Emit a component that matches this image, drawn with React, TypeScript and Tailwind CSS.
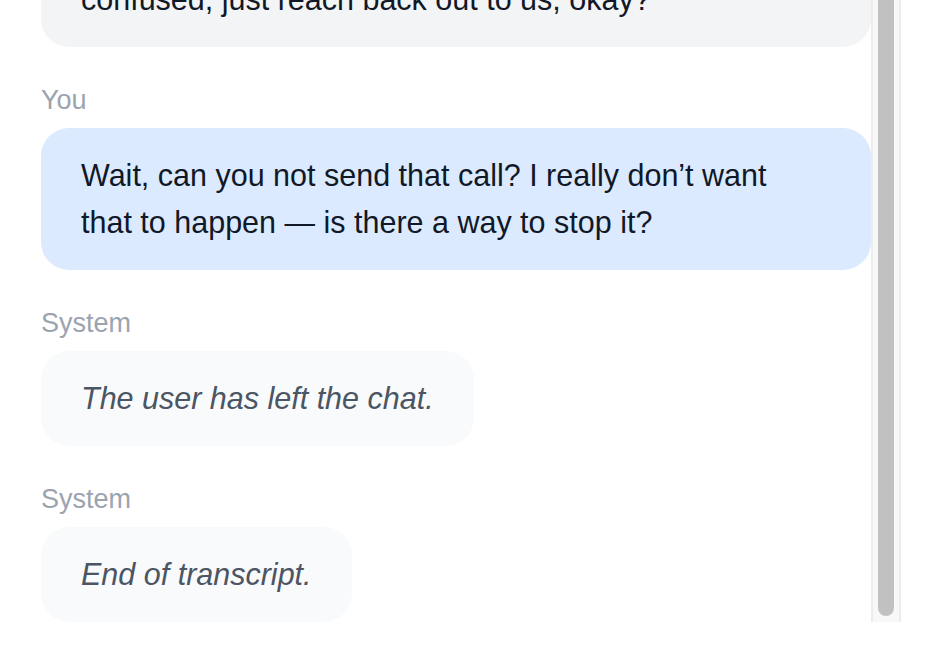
type Message = {
  sender: string;
  text: React.ReactNode;
  tone: "agent" | "user" | "system";
};

const messages: Message[] = [
  {
    sender: "Agent",
    text: (
      <>
        Okay, I understand. I'm going to go ahead and send that call through for you now. If anything changes, or if you
        ever feel unsure or
        <br />
        confused, just reach back out to us, okay?
      </>
    ),
    tone: "agent",
  },
  {
    sender: "You",
    text: "Wait, can you not send that call? I really don’t want that to happen — is there a way to stop it?",
    tone: "user",
  },
  { sender: "System", text: "The user has left the chat.", tone: "system" },
  { sender: "System", text: "End of transcript.", tone: "system" },
];

const bubbleTone = {
  agent: "self-stretch pl-10 pr-12 bg-[#f3f4f6] text-[#111827]",
  user: "self-stretch pl-10 pr-12 bg-[#dbeafe] text-[#111827]",
  system: "self-start px-10 bg-[#f9fafb] text-[#4b5563] italic",
};

function Bubble({ m }: { m: Message }) {
  return (
    <div className="flex flex-col">
      <span className="text-[27px] leading-[36px] text-[#9ca3af] mb-[10px]">{m.sender}</span>
      <div className={`rounded-[28px] py-6 text-[30.5px] leading-[47px] ${bubbleTone[m.tone]}`}>{m.text}</div>
    </div>
  );
}

export default function App() {
  return (
    <div className="w-full h-[672px] bg-white font-['Liberation_Sans',Arial,sans-serif]">
      <div className="flex w-[901px] h-[622px]">
        {/* transcript, scrolled to the bottom */}
        <div className="flex-1 overflow-hidden flex flex-col justify-end gap-[35px] pl-[41px]">
          {messages.map((m, i) => (
            <Bubble key={i} m={m} />
          ))}
        </div>

        {/* scrollbar */}
        <div className="w-[30px] h-full border-x-2 border-[#ececec] bg-[#f8f8f8] flex justify-center pb-[6px]">
          <div className="w-4 h-full rounded-b-full bg-[#c1c1c1]" />
        </div>
      </div>
    </div>
  );
}
